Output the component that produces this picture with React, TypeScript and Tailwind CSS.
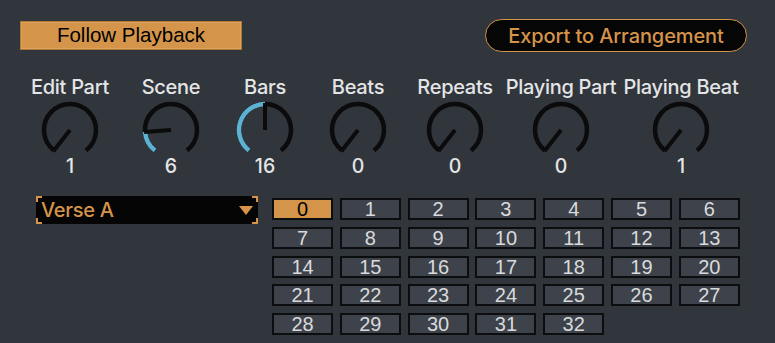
import React from 'react';

const ORANGE = '#d6944b';
const BLUE = '#5db2d4';

type KnobProps = {
  label: string;
  value: string;
  angle: number;
  filled?: boolean;
  width: string;
};

const polar = (a: number, r: number) => {
  const rad = (a * Math.PI) / 180;
  return { x: 30 + r * Math.sin(rad), y: 30 - r * Math.cos(rad) };
};

const arc = (from: number, to: number, r: number) => {
  const s = polar(from, r);
  const e = polar(to, r);
  const large = to - from > 180 ? 1 : 0;
  return `M ${s.x} ${s.y} A ${r} ${r} 0 ${large} 1 ${e.x} ${e.y}`;
};

const MIN = -142;
const MAX = 142;

const Knob = ({ label, value, angle, filled, width }: KnobProps) => {
  const tip = polar(angle, 27);
  return (
    <div className={`${width} flex flex-col items-center`}>
      <div className="h-[20px] leading-[20px] text-[20px] font-medium text-[#e4e5e6] whitespace-nowrap tracking-[-0.3px] font-['Inter',sans-serif]">
        {label}
      </div>
      <svg width="60" height="60" viewBox="0 0 60 60" className="mt-[3px]">
        <path d={arc(MIN, MAX, 26)} stroke="#0b0b0c" strokeWidth="4.5" fill="none" />
        {filled && angle > MIN && (
          <path d={arc(MIN, angle, 26)} stroke={BLUE} strokeWidth="4.5" fill="none" />
        )}
        <line x1="30" y1="30" x2={tip.x} y2={tip.y} stroke="#0b0b0c" strokeWidth="4" />
      </svg>
      <div className="-mt-[4px] h-[20px] leading-[20px] text-[19.5px] font-medium text-[#e4e5e6] font-['Inter',sans-serif]">
        {value}
      </div>
    </div>
  );
};

const Corner = ({ className }: { className: string }) => (
  <span className={`absolute w-[6px] h-[6px] border-[#d6944b] ${className}`} />
);

export default function App() {
  const knobs: KnobProps[] = [
    { label: 'Edit Part', value: '1', angle: MIN, width: 'w-[100px]' },
    { label: 'Scene', value: '6', angle: -94, filled: true, width: 'w-[102px]' },
    { label: 'Bars', value: '16', angle: 0, filled: true, width: 'w-[86px]' },
    { label: 'Beats', value: '0', angle: MIN, width: 'w-[100px]' },
    { label: 'Repeats', value: '0', angle: MIN, width: 'w-[94px]' },
    { label: 'Playing Part', value: '0', angle: MIN, width: 'w-[118px]' },
    { label: 'Playing Beat', value: '1', angle: MIN, width: 'w-[122px]' },
  ];

  const cells = Array.from({ length: 33 }, (_, i) => i);

  return (
    <div className="w-[775px] h-[343px] bg-[#31353c] flex flex-col overflow-hidden">
      {/* Top buttons */}
      <div className="flex items-center justify-between pl-[20px] pr-[28px] pt-[19px]">
        <button className="w-[222px] h-[29px] bg-[#d4954a] border border-[#b17632] shadow-[inset_0_0_0_1px_#dca463] flex items-center justify-center text-[20.5px] text-black font-['Liberation_Sans',Arial,sans-serif] leading-none">
          Follow Playback
        </button>
        <button className="w-[262px] h-[33px] bg-[#060606] border-[1.5px] border-[#d6944b] rounded-full flex items-center justify-center text-[20px] font-medium text-[#d6944b] font-['Inter',sans-serif] leading-none tracking-[-0.1px]">
          Export to Arrangement
        </button>
      </div>

      {/* Knobs */}
      <div className="flex pl-[20px] mt-[25px]">
        {knobs.map((k) => (
          <Knob key={k.label} {...k} />
        ))}
      </div>

      {/* Bottom: dropdown + grid */}
      <div className="flex items-start mt-[20px] pl-[36px]">
        <div className="relative w-[222px] h-[28px] bg-[#050505] flex items-center justify-between pl-[5px] pr-[5px]">
          <Corner className="top-0 left-0 border-t-2 border-l-2" />
          <Corner className="top-0 right-0 border-t-2 border-r-2" />
          <Corner className="bottom-0 left-0 border-b-2 border-l-2" />
          <Corner className="bottom-0 right-0 border-b-2 border-r-2" />
          <span className="text-[20px] font-medium text-[#d6944b] font-['Inter',sans-serif] leading-none tracking-[-0.3px]">
            Verse A
          </span>
          <svg width="14" height="9" viewBox="0 0 14 9">
            <polygon points="0,0 14,0 7,9" fill={ORANGE} />
          </svg>
        </div>
        <div className="ml-[14px] mt-[2px] grid grid-cols-[repeat(7,61px)] gap-x-[6.8px] gap-y-[6.8px]">
          {cells.map((n) => (
            <div
              key={n}
              className={`h-[22px] border-2 border-[#0c0d0e] flex items-center justify-center text-[20px] leading-none font-['Liberation_Sans',Arial,sans-serif] ${
                n === 0 ? 'bg-[#d4954a] text-black' : 'bg-[#3e434b] text-[#d9dadc]'
              }`}
            >
              {n}
            </div>
          ))}
        </div>
      </div>
    </div>
  );
}
